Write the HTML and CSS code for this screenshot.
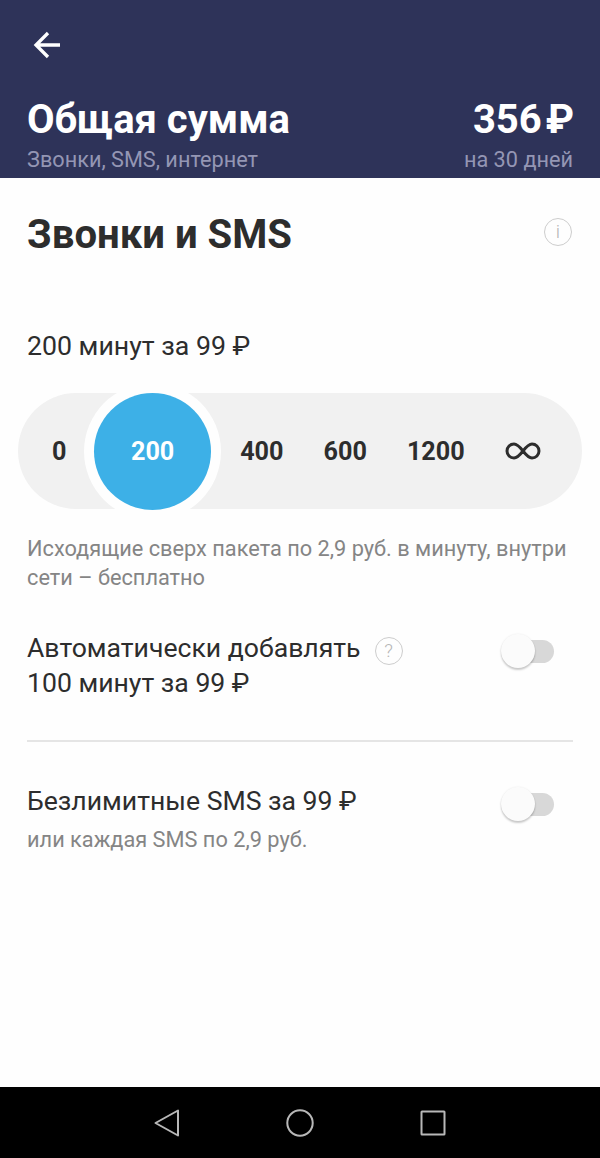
FILE: index.html
```html
<!DOCTYPE html>
<html lang="ru">
<head>
    <meta charset="UTF-8">
    <meta name="viewport" content="width=device-width, initial-scale=1.0">
    <title>Звонки и SMS</title>
    <link rel="stylesheet" href="styles.css">
</head>
<body>
    <div class="screen">
        <header class="header">
            <svg class="back" viewBox="0 0 28 28">
                <path d="M27 14H3M15 2 3 14l12 12"/>
            </svg>
            <div class="total">
                <span>Общая сумма</span>
                <span class="total-price">356<span class="total-currency">₽</span></span>
            </div>
            <div class="total-info">
                <span>Звонки, SMS, интернет</span>
                <span>на 30 дней</span>
            </div>
        </header>

        <main class="content">
            <div class="section-title">
                <h1>Звонки и SMS</h1>
                <span class="hint hint-info">i</span>
            </div>

            <!-- Minutes package -->
            <div class="package-price">200 минут за 99 ₽</div>
            <div class="slider">
                <span>0</span>
                <span class="selected">200</span>
                <span>400</span>
                <span>600</span>
                <span>1200</span>
                <svg class="infinity" viewBox="0 0 36 18">
                    <path d="M18 9C14.5 4.5 12.3 2 9 2a7 7 0 0 0 0 14c3.3 0 5.5-2.5 9-7s5.7-7 9-7a7 7 0 0 1 0 14c-3.3 0-5.5-2.5-9-7z"/>
                </svg>
            </div>
            <p class="note">Исходящие сверх пакета по 2,9 руб. в минуту, внутри сети – бесплатно</p>

            <div class="option">
                <div class="option-name">Автоматически добавлять<br>100 минут за 99 ₽</div>
                <span class="hint hint-help">?</span>
                <div class="toggle"><div class="knob"></div></div>
            </div>

            <!-- SMS package -->
            <div class="option option-sms">
                <div>
                    <div class="option-name">Безлимитные SMS за 99 ₽</div>
                    <div class="option-info">или каждая SMS по 2,9 руб.</div>
                </div>
                <div class="toggle"><div class="knob"></div></div>
            </div>
        </main>

        <nav class="navbar">
            <svg viewBox="0 0 28 28"><path d="M25 1.5v25L2.500 14z"/></svg>
            <svg viewBox="0 0 28 28"><circle cx="14" cy="14" r="12.7"/></svg>
            <svg viewBox="0 0 28 28"><rect x="2.5" y="2.5" width="23" height="23" rx="0.5"/></svg>
        </nav>
    </div>
</body>
</html>
```

FILE: styles.css
```css
* {
    box-sizing: border-box;
}
body {
    margin: 0;
    font-family: Roboto, sans-serif;
    color: #2d2d2d;
    background: #fefefe;
}
.screen {
    width: 600px;
    height: 1158px;
    display: flex;
    flex-direction: column;
}
.header {
    height: 178px;
    padding: 31px 27px 0;
    background: #2e3359;
    color: #fff;
}
.back {
    display: block;
    width: 28px;
    height: 28px;
    margin-left: 6px;
    fill: none;
    stroke: #fff;
    stroke-width: 3.3;
}
.total {
    display: flex;
    justify-content: space-between;
    margin-top: 37px;
    font-size: 40px;
    font-weight: bold;
    line-height: 48px;
}
.total-price {
    margin-right: -1px;
}
.total-currency {
    margin-left: 4px;
}
.total-info {
    display: flex;
    justify-content: space-between;
    margin-top: 1px;
    font-size: 21.7px;
    line-height: 30px;
    color: #9496b4;
}
.content {
    flex: 1;
    padding: 33px 27px 0;
}
.section-title {
    display: flex;
    justify-content: space-between;
}
h1 {
    margin: 0;
    font-size: 40.1px;
    line-height: 48px;
}
.hint {
    flex: none;
    width: 28px;
    height: 28px;
    border: 1.5px solid #cdcdcd;
    border-radius: 50%;
    font-size: 19px;
    font-weight: 300;
    line-height: 26px;
    text-align: center;
    color: #b5b5b5;
}
.hint-info {
    margin-top: 7px;
    margin-right: 1px;
}
.package-price {
    margin-top: 70px;
    font-size: 26.7px;
    line-height: 34px;
}
.slider {
    display: flex;
    align-items: center;
    gap: 40px;
    height: 116px;
    margin: 30px -9px 0;
    padding-left: 34px;
    border-radius: 58px;
    background: #f1f1f1;
    font-size: 25.2px;
    font-weight: bold;
}
.selected {
    width: 117px;
    height: 117px;
    margin: 0 -11px 0 -12.3px;
    border-radius: 50%;
    background: #3db0e7;
    box-shadow: 0 0 0 10px #fefefe;
    color: #fff;
    line-height: 117px;
    text-align: center;
}
.infinity {
    width: 36px;
    height: 18px;
    fill: none;
    stroke: #2d2d2d;
    stroke-width: 3;
}
.note {
    margin: 25px 0 0;
    font-size: 21.75px;
    line-height: 29px;
    color: #858585;
}
.option {
    display: flex;
    height: 111px;
    margin-top: 39px;
    border-bottom: 2px solid #e5e5e5;
}
.option-name {
    margin-top: -1px;
    font-size: 26.6px;
    line-height: 35px;
}
.hint-help {
    margin: 6px 0 0 14px;
}
.option-sms {
    height: auto;
    margin-top: 42px;
    border: none;
}
.option-info {
    margin-top: 7px;
    font-size: 21.75px;
    line-height: 30px;
    color: #858585;
}
.toggle {
    width: 50px;
    height: 23px;
    margin: 9px 19px 0 auto;
    border-radius: 12px;
    background: #d8d8d8;
}
.knob {
    width: 34px;
    height: 34px;
    margin: -6px 0 0 -3px;
    border-radius: 50%;
    background: #fbfbfb;
    box-shadow: 0 2px 2px rgba(0,0,0,0.2), 0 0 2px rgba(0,0,0,0.08);
}
.navbar {
    display: flex;
    justify-content: center;
    align-items: center;
    gap: 105px;
    height: 71px;
    background: #000;
}
.navbar svg {
    width: 28px;
    height: 28px;
    fill: none;
    stroke: #b8b8b8;
    stroke-width: 2;
    stroke-linejoin: round;
}
```
